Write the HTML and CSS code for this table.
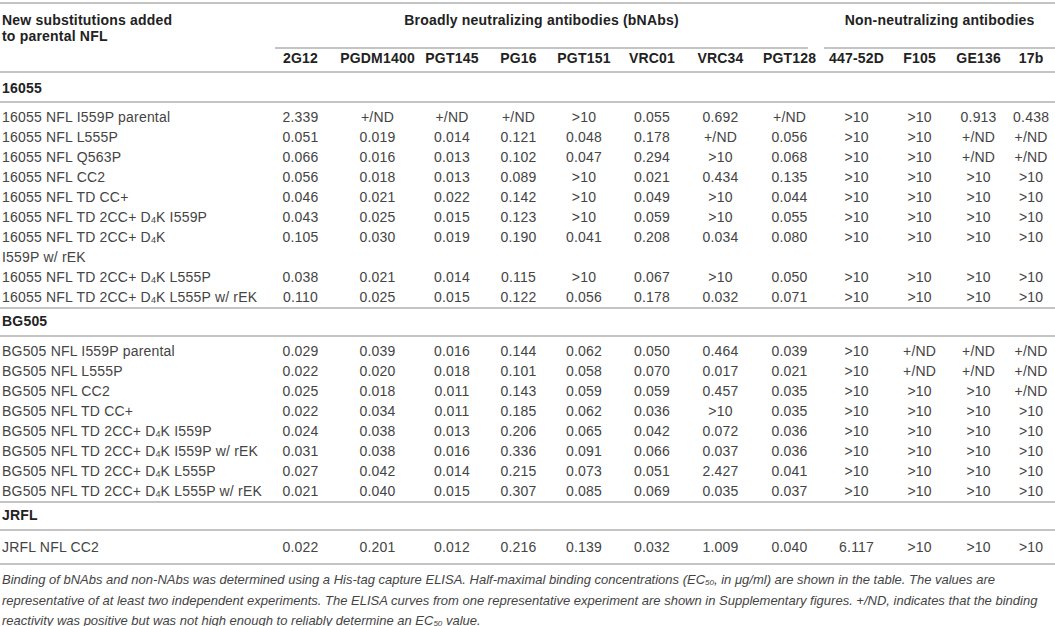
FILE: index.html
```html
<!DOCTYPE html>
<html lang="en">
<head>
  <meta charset="UTF-8" />
  <title>Binding of bNAbs and non-NAbs to NFL trimers</title>
  <link rel="stylesheet" href="styles.css">
</head>
<body>
  <table class="binding">
    <colgroup>
      <col class="c-label">
      <col style="width:75px"><col style="width:79px"><col style="width:70px"><col style="width:63px">
      <col style="width:68px"><col style="width:68px"><col style="width:69px"><col style="width:69px">
      <col style="width:65px"><col style="width:61px"><col style="width:57px"><col style="width:48px">
    </colgroup>
    <thead>
      <tr class="head-top">
        <th rowspan="2" class="label-head">New substitutions added<br>to parental NFL</th>
        <th colspan="8" class="group"><div class="group-bn">Broadly neutralizing antibodies (bNAbs)</div></th>
        <th colspan="4" class="group"><div class="group-non">Non-neutralizing antibodies</div></th>
      </tr>
      <tr class="head-cols">
        <th>2G12</th><th>PGDM1400</th><th>PGT145</th><th>PG16</th><th>PGT151</th><th>VRC01</th><th>VRC34</th><th>PGT128</th>
        <th>447-52D</th><th>F105</th><th>GE136</th><th>17b</th>
      </tr>
    </thead>

    <tbody>
      <tr class="section"><td colspan="13">16055</td></tr>
      <tr class="first"><td>16055 NFL I559P parental</td><td>2.339</td><td>+/ND</td><td>+/ND</td><td>+/ND</td><td>&gt;10</td><td>0.055</td><td>0.692</td><td>+/ND</td><td>&gt;10</td><td>&gt;10</td><td>0.913</td><td>0.438</td></tr>
      <tr><td>16055 NFL L555P</td><td>0.051</td><td>0.019</td><td>0.014</td><td>0.121</td><td>0.048</td><td>0.178</td><td>+/ND</td><td>0.056</td><td>&gt;10</td><td>&gt;10</td><td>+/ND</td><td>+/ND</td></tr>
      <tr><td>16055 NFL Q563P</td><td>0.066</td><td>0.016</td><td>0.013</td><td>0.102</td><td>0.047</td><td>0.294</td><td>&gt;10</td><td>0.068</td><td>&gt;10</td><td>&gt;10</td><td>+/ND</td><td>+/ND</td></tr>
      <tr><td>16055 NFL CC2</td><td>0.056</td><td>0.018</td><td>0.013</td><td>0.089</td><td>&gt;10</td><td>0.021</td><td>0.434</td><td>0.135</td><td>&gt;10</td><td>&gt;10</td><td>&gt;10</td><td>&gt;10</td></tr>
      <tr><td>16055 NFL TD CC+</td><td>0.046</td><td>0.021</td><td>0.022</td><td>0.142</td><td>&gt;10</td><td>0.049</td><td>&gt;10</td><td>0.044</td><td>&gt;10</td><td>&gt;10</td><td>&gt;10</td><td>&gt;10</td></tr>
      <tr><td>16055 NFL TD 2CC+ D<sub>4</sub>K I559P</td><td>0.043</td><td>0.025</td><td>0.015</td><td>0.123</td><td>&gt;10</td><td>0.059</td><td>&gt;10</td><td>0.055</td><td>&gt;10</td><td>&gt;10</td><td>&gt;10</td><td>&gt;10</td></tr>
      <tr><td>16055 NFL TD 2CC+ D<sub>4</sub>K<br>I559P w/ rEK</td><td>0.105</td><td>0.030</td><td>0.019</td><td>0.190</td><td>0.041</td><td>0.208</td><td>0.034</td><td>0.080</td><td>&gt;10</td><td>&gt;10</td><td>&gt;10</td><td>&gt;10</td></tr>
      <tr><td>16055 NFL TD 2CC+ D<sub>4</sub>K L555P</td><td>0.038</td><td>0.021</td><td>0.014</td><td>0.115</td><td>&gt;10</td><td>0.067</td><td>&gt;10</td><td>0.050</td><td>&gt;10</td><td>&gt;10</td><td>&gt;10</td><td>&gt;10</td></tr>
      <tr class="last"><td>16055 NFL TD 2CC+ D<sub>4</sub>K L555P w/ rEK</td><td>0.110</td><td>0.025</td><td>0.015</td><td>0.122</td><td>0.056</td><td>0.178</td><td>0.032</td><td>0.071</td><td>&gt;10</td><td>&gt;10</td><td>&gt;10</td><td>&gt;10</td></tr>
    </tbody>

    <tbody>
      <tr class="section"><td colspan="13">BG505</td></tr>
      <tr class="first"><td>BG505 NFL I559P parental</td><td>0.029</td><td>0.039</td><td>0.016</td><td>0.144</td><td>0.062</td><td>0.050</td><td>0.464</td><td>0.039</td><td>&gt;10</td><td>+/ND</td><td>+/ND</td><td>+/ND</td></tr>
      <tr><td>BG505 NFL L555P</td><td>0.022</td><td>0.020</td><td>0.018</td><td>0.101</td><td>0.058</td><td>0.070</td><td>0.017</td><td>0.021</td><td>&gt;10</td><td>+/ND</td><td>+/ND</td><td>+/ND</td></tr>
      <tr><td>BG505 NFL CC2</td><td>0.025</td><td>0.018</td><td>0.011</td><td>0.143</td><td>0.059</td><td>0.059</td><td>0.457</td><td>0.035</td><td>&gt;10</td><td>&gt;10</td><td>&gt;10</td><td>+/ND</td></tr>
      <tr><td>BG505 NFL TD CC+</td><td>0.022</td><td>0.034</td><td>0.011</td><td>0.185</td><td>0.062</td><td>0.036</td><td>&gt;10</td><td>0.035</td><td>&gt;10</td><td>&gt;10</td><td>&gt;10</td><td>&gt;10</td></tr>
      <tr><td>BG505 NFL TD 2CC+ D<sub>4</sub>K I559P</td><td>0.024</td><td>0.038</td><td>0.013</td><td>0.206</td><td>0.065</td><td>0.042</td><td>0.072</td><td>0.036</td><td>&gt;10</td><td>&gt;10</td><td>&gt;10</td><td>&gt;10</td></tr>
      <tr><td>BG505 NFL TD 2CC+ D<sub>4</sub>K I559P w/ rEK</td><td>0.031</td><td>0.038</td><td>0.016</td><td>0.336</td><td>0.091</td><td>0.066</td><td>0.037</td><td>0.036</td><td>&gt;10</td><td>&gt;10</td><td>&gt;10</td><td>&gt;10</td></tr>
      <tr><td>BG505 NFL TD 2CC+ D<sub>4</sub>K L555P</td><td>0.027</td><td>0.042</td><td>0.014</td><td>0.215</td><td>0.073</td><td>0.051</td><td>2.427</td><td>0.041</td><td>&gt;10</td><td>&gt;10</td><td>&gt;10</td><td>&gt;10</td></tr>
      <tr class="last"><td>BG505 NFL TD 2CC+ D<sub>4</sub>K L555P w/ rEK</td><td>0.021</td><td>0.040</td><td>0.015</td><td>0.307</td><td>0.085</td><td>0.069</td><td>0.035</td><td>0.037</td><td>&gt;10</td><td>&gt;10</td><td>&gt;10</td><td>&gt;10</td></tr>
    </tbody>

    <tbody>
      <tr class="section"><td colspan="13">JRFL</td></tr>
      <tr class="single"><td>JRFL NFL CC2</td><td>0.022</td><td>0.201</td><td>0.012</td><td>0.216</td><td>0.139</td><td>0.032</td><td>1.009</td><td>0.040</td><td>6.117</td><td>&gt;10</td><td>&gt;10</td><td>&gt;10</td></tr>
    </tbody>
  </table>

  <p class="note">
    Binding of bNAbs and non-NAbs was determined using a His-tag capture ELISA. Half-maximal binding concentrations (EC<sub>50</sub>, in μg/ml) are shown in the table. The values are<br>
    representative of at least two independent experiments. The ELISA curves from one representative experiment are shown in Supplementary figures. +/ND, indicates that the binding<br>
    reactivity was positive but was not high enough to reliably determine an EC<sub>50</sub> value.
  </p>
</body>
</html>
```

FILE: styles.css
```css
* {
  box-sizing: border-box;
  margin: 0;
  padding: 0;
}

body {
  background: #fff;
  color: #444;
  font-family: "Liberation Sans", Arial, sans-serif;
  font-size: 14px;
  padding-top: 2px;
  width: 1055px;
}

.binding {
  width: 1055px;
  table-layout: fixed;
  border-collapse: collapse;
  border-top: 2px solid #c4c4c4;
  line-height: 20px;
  letter-spacing: 0.2px;
}

.c-label {
  width: 263px;
}

th {
  color: #222;
  font-weight: bold;
  text-align: center;
  white-space: nowrap;
}

td {
  text-align: center;
  vertical-align: top;
  white-space: nowrap;
}

td:first-child {
  text-align: left;
  padding-left: 2px;
}

.label-head {
  text-align: left;
  vertical-align: top;
  padding: 8px 0 0 2px;
  line-height: 16px;
  border-bottom: 2px solid #c4c4c4;
}

.head-top .group {
  padding-top: 6px;
  vertical-align: top;
}

.group div {
  padding-bottom: 17px;
  border-bottom: 2px solid #c4c4c4;
}

.group-bn {
  margin: 0 16px 0 12px;
}

.head-cols th {
  line-height: 18px;
  padding: 0 0 4px;
  border-bottom: 2px solid #c4c4c4;
}

.section td {
  color: #222;
  font-weight: bold;
  padding: 2px 2px 4px;
  border-bottom: 2px solid #c4c4c4;
}

tbody:first-of-type .section td {
  padding: 5px 2px 3px;
}

tr.first td {
  padding-top: 4px;
}

tr.last td {
  padding-bottom: 0;
  border-bottom: 2px solid #c4c4c4;
}

tr.single td {
  padding: 6px 0 6px;
  border-bottom: 2px solid #c4c4c4;
}

tr.single td:first-child {
  padding-left: 2px;
}

sub {
  font-size: 9px;
  line-height: 0;
  vertical-align: -1px;
  letter-spacing: 0;
}

.note {
  font-style: italic;
  font-size: 13px;
  line-height: 20.5px;
  color: #444;
  padding: 5px 0 0 2px;
  white-space: nowrap;
}

.note sub {
  font-size: 8px;
}
```
